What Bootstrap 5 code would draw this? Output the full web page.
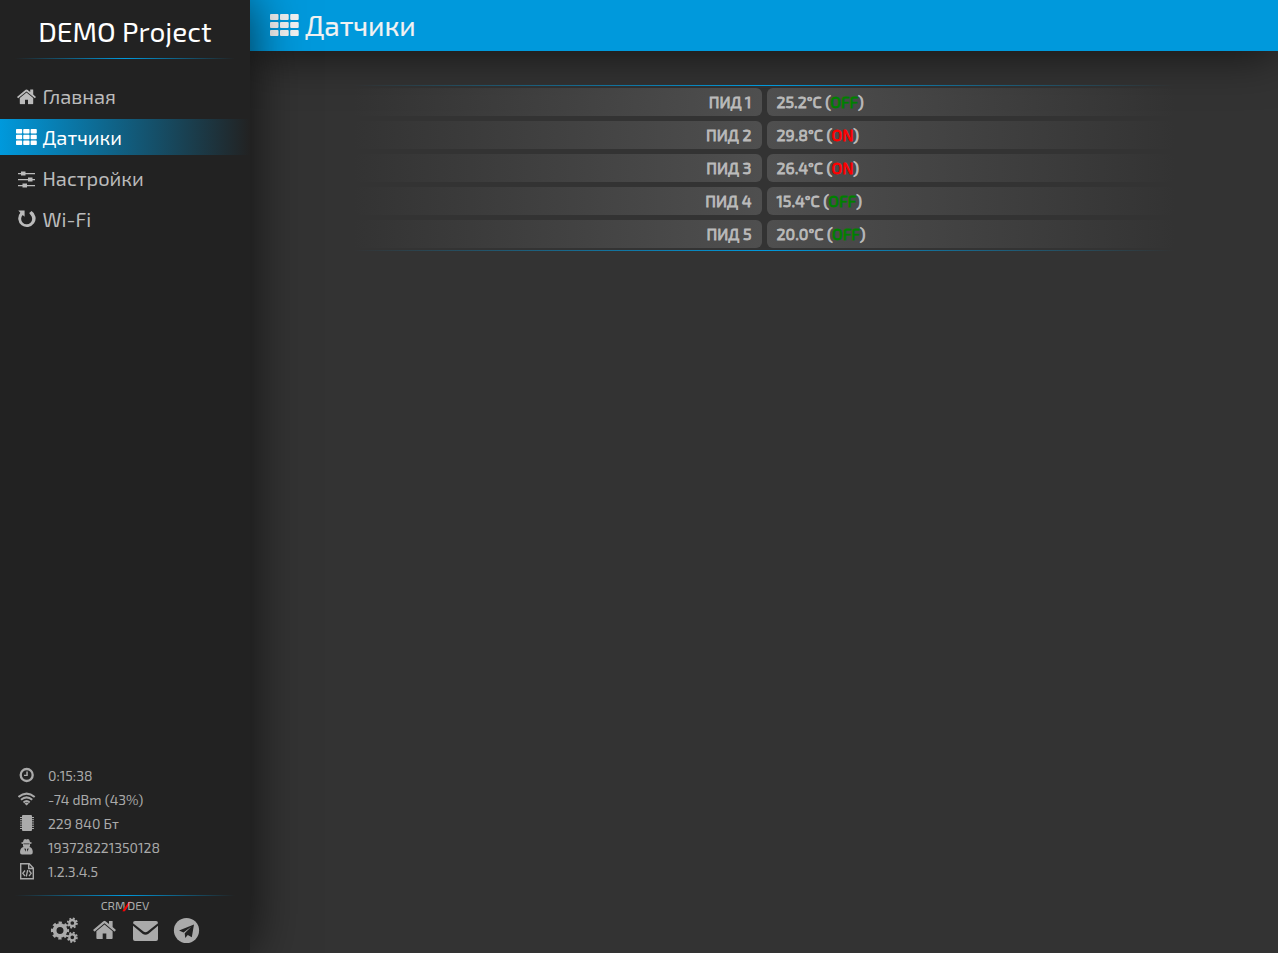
<!DOCTYPE html>
<html lang="ru" data-bs-theme="dark">
<head>
<meta charset="utf-8">
<title>DEMO Project</title>
<link href="https://cdn.jsdelivr.net/npm/bootstrap@5.3.0/dist/css/bootstrap.min.css" rel="stylesheet">
<style>
body{background:#333;color:#bbb;font-family:"Exo 2","Noto Sans",sans-serif;overflow:hidden}
svg{display:block;fill:currentColor;flex:none}
.side{width:250px;background:#222;box-shadow:0 0 50px rgba(0,0,0,.7);z-index:3}
.brand{height:58px;padding-top:5px;font-size:28px;line-height:52px;color:#fff}
.rule{height:1px;background:linear-gradient(90deg,transparent,#0099dc,transparent)}
.side .rule{margin:0 15px}
.menu{margin-top:19px;gap:5px}
.menu .nav-link{height:36px;padding:0 0 0 16px;font-size:20px;line-height:36px;color:#bbb;border-radius:0;gap:5.500px}
.menu .nav-link.active{color:#fff;background:linear-gradient(90deg,#0099dc,#222)}
.stats{font-size:14px;line-height:24px;color:#aaa;padding-left:18px;margin-bottom:11px}
.stats li{height:24px;gap:12px}
.crm{font-size:12px;height:20px;line-height:19px;color:#aaa}
.crm i{color:red;font-weight:700;margin:0 -2.500px;-webkit-text-stroke:.6px red}
.tools{height:37px;color:#aaa;padding-left:50px}
.topbar{height:51px;background:#0099dc;color:#f2f2f2;box-shadow:0 0 50px rgba(0,0,0,.7);padding:0 0 2px 20px;gap:6px;font-size:28px;letter-spacing:-.1px;-webkit-text-stroke:.2px}
.sensors{width:822px;margin:34px auto 0 103px;font-size:16px;font-weight:400;line-height:28px}
.rows{gap:5px;padding:2px 0}
.pair{gap:5px;height:28px}
.cell-l,.cell-r{flex:1 1 0;padding:0 10px;border-radius:6px;-webkit-text-stroke:.8px}
.cell-l{background:linear-gradient(270deg,#4f4f4f,rgba(79,79,79,0))}
.cell-r{background:linear-gradient(90deg,#4f4f4f,rgba(79,79,79,0))}
.off{color:green}.on{color:red}
</style>
</head>
<body>
<svg width="0" height="0" class="position-absolute"><defs>
<symbol id="th" viewBox="0 0 29 22"><path d="M1 0h6.5q1 0 1 1v4q0 1-1 1H1q-1 0-1-1V1q0-1 1-1zM11 0h6.700q1 0 1 1v4q0 1-1 1H11q-1 0-1-1V1q0-1 1-1zM21.200 0h6.500q1 0 1 1v4q0 1-1 1h-6.500q-1 0-1-1V1q0-1 1-1zM1 8h6.500q1 0 1 1v4q0 1-1 1H1q-1 0-1-1V9q0-1 1-1zM11 8h6.700q1 0 1 1v4q0 1-1 1H11q-1 0-1-1V9q0-1 1-1zM21.200 8h6.500q1 0 1 1v4q0 1-1 1h-6.500q-1 0-1-1V9q0-1 1-1zM1 16h6.500q1 0 1 1v4q0 1-1 1H1q-1 0-1-1v-4q0-1 1-1zM11 16h6.700q1 0 1 1v4q0 1-1 1H11q-1 0-1-1v-4q0-1 1-1zM21.200 16h6.500q1 0 1 1v4q0 1-1 1h-6.500q-1 0-1-1v-4q0-1 1-1z"/></symbol>
<symbol id="home" viewBox="80 230 1632 1310"><path d="M1472 992v480q0 26-19 45t-45 19h-384v-384h-256v384h-384q-26 0-45-19t-19-45v-480q0-1 .5-3t.5-3l575-474 575 474q1 2 1 6zm223-69l-62 74q-8 9-21 11h-3q-13 0-21-7l-692-577-692 577q-12 8-24 7-13-2-21-11l-62-74q-8-10-7-23.5t11-21.500l719-599q32-26 76-26t76 26l244 204v-195q0-14 9-23t23-9h192q14 0 23 9t9 23v408l219 182q10 8 11 21.500t-7 23.500z"/></symbol>
</defs></svg>
<div class="d-flex vh-100">
<aside class="side d-flex flex-column flex-shrink-0 position-relative">
  <div class="brand text-center">DEMO Project</div>
  <div class="rule"></div>
  <nav class="menu nav flex-column">
    <a class="nav-link d-flex align-items-center" href="#"><svg width="21" height="18"><use href="#home" x="1" y="2" width="19" height="15.500"/></svg><span>Главная</span></a>
    <a class="nav-link active d-flex align-items-center" href="#"><svg width="21" height="16"><use href="#th" width="21" height="16"/></svg><span>Датчики</span></a>
    <a class="nav-link d-flex align-items-center" href="#"><svg width="21" height="20" viewBox="0 -1 21 20"><path d="M2 4h17v1.200H2zM2 10h17v1.200H2zM2 16h17v1.200H2zM5 2.500h4.500v4H5zM12 8.500h4.500v4H12zM6.500 14.500H11v4H6.500z"/></svg><span>Настройки</span></a>
    <a class="nav-link d-flex align-items-center" href="#"><svg width="21" height="22" viewBox="0 -1 21 22"><path d="M2.300 1.500h6.300v6.300L6.700 6A5.500 5.500 0 1 0 14.600 6L13.200 4l2.400-2A8.700 8.700 0 1 1 4.300 3.700z"/></svg><span>Wi-Fi</span></a>
  </nav>
  <ul class="stats list-unstyled mt-auto">
    <li class="d-flex align-items-center"><svg width="18" height="18" viewBox="0 0 18 18"><circle cx="8.700" cy="8" r="6" fill="none" stroke="currentColor" stroke-width="2.300"/><path d="M8.300 4.500H9.800V9H6V7.700h2.300z"/></svg><span>0:15:38</span></li>
    <li class="d-flex align-items-center"><svg width="18" height="18" viewBox="0 0 18 18"><g fill="none" stroke="currentColor" stroke-width="2"><path d="M.5 6Q8.600-.8 16.700 6M3 8.800Q8.600 4 14.200 8.800M5.500 11.400Q8.600 8.600 11.700 11.400"/></g><path d="M8.600 14.600l-2.100-2.200q2.100-1.600 4.200 0z"/></svg><span>-74 dBm (43%)</span></li>
    <li class="d-flex align-items-center"><svg width="18" height="18" viewBox="0 0 18 18"><rect x="4" y="0" width="10" height="16" rx="1"/><path d="M2 2.500h14M2 4.700h14M2 6.900h14M2 9.100h14M2 11.300h14M2 13.500h14" stroke="currentColor" stroke-width="1"/></svg><span>229 840 Бт</span></li>
    <li class="d-flex align-items-center"><svg width="18" height="18" viewBox="0 0 18 18"><path d="M5 3Q5.500 0 7 0l1.500.5L10 0q1.500 0 2 3l2 .8q0 1-2 1.200.3 2-.5 3Q14.500 8.500 14.800 13q0 2.500-2 2.500H4q-2 0-2-2.500Q2.300 8.500 5.500 8 4.700 7 5 5q-2-.2-2-1.200z"/><path fill="#222" d="M5.500 4.500h6v.7h-6zM7 9.200l1 1-.4 2.500-1.200-3zM10 9.200l-1 1 .4 2.500 1.200-3z"/></svg><span>193728221350128</span></li>
    <li class="d-flex align-items-center"><svg width="18" height="18" viewBox="0 0 18 18"><path d="M2.700.7h8.500L15.300 5v10.800H2.700zM10.700.7V5.500h4.600" fill="none" stroke="currentColor" stroke-width="1.400"/><path d="M7 7.500L4.800 10.300 7 13M11 7.500l2.200 2.800L11 13M9.700 7L8.300 13.500" fill="none" stroke="currentColor" stroke-width="1.300"/></svg><span>1.2.3.4.5</span></li>
  </ul>
  <div class="rule"></div>
  <div class="crm text-center">CRM<i>/</i>DEV</div>
  <div class="tools d-flex">
    <svg width="150" height="30" viewBox="50 916 150 30">
      <g fill="none" stroke="currentColor"><circle cx="60" cy="930.500" r="5.400" stroke-width="3.800"/><circle cx="60" cy="930.500" r="7.700" stroke-width="2.800" stroke-dasharray="3.200 2.848" stroke-dashoffset="1.600"/>
      <circle cx="72.300" cy="923" r="3" stroke-width="2.300"/><circle cx="72.300" cy="923" r="4.600" stroke-width="1.800" stroke-dasharray="1.900 1.713"/>
      <circle cx="72.300" cy="937.300" r="3" stroke-width="2.300"/><circle cx="72.300" cy="937.300" r="4.600" stroke-width="1.800" stroke-dasharray="1.900 1.713"/></g>
      <use href="#home" x="93" y="920.500" width="23" height="18.500"/>
      <path d="M135 921h21q2 0 2 2.200L147.500 931.500q-2 1.500-4 0L133 923.200q0-2.200 2-2.200zM133 925.700l9.500 8q3 2.200 6 0l9.500-8V939q0 2-2 2h-21q-2 0-2-2z"/>
      <circle cx="186.500" cy="930.500" r="12.600"/><path fill="#222" d="M194 924.500l-2.200 12.700-4-2.200-2.600 3-.5-4.700 6.800-6.800-8 6-4.500-2z"/>
    </svg>
  </div>
</aside>
<main class="flex-grow-1">
  <header class="topbar d-flex align-items-center"><svg width="29" height="22"><use href="#th" width="29" height="22"/></svg><span>Датчики</span></header>
  <section class="sensors">
    <div class="rule"></div>
    <div class="rows d-flex flex-column">
      <div class="pair d-flex"><div class="cell-l text-end">ПИД 1</div><div class="cell-r">25.2°C (<span class="off">OFF</span>)</div></div>
      <div class="pair d-flex"><div class="cell-l text-end">ПИД 2</div><div class="cell-r">29.8°C (<span class="on">ON</span>)</div></div>
      <div class="pair d-flex"><div class="cell-l text-end">ПИД 3</div><div class="cell-r">26.4°C (<span class="on">ON</span>)</div></div>
      <div class="pair d-flex"><div class="cell-l text-end">ПИД 4</div><div class="cell-r">15.4°C (<span class="off">OFF</span>)</div></div>
      <div class="pair d-flex"><div class="cell-l text-end">ПИД 5</div><div class="cell-r">20.0°C (<span class="off">OFF</span>)</div></div>
    </div>
    <div class="rule"></div>
  </section>
</main>
</div>
<script src="https://cdn.jsdelivr.net/npm/bootstrap@5.3.0/dist/js/bootstrap.bundle.min.js"></script>
</body>
</html>
